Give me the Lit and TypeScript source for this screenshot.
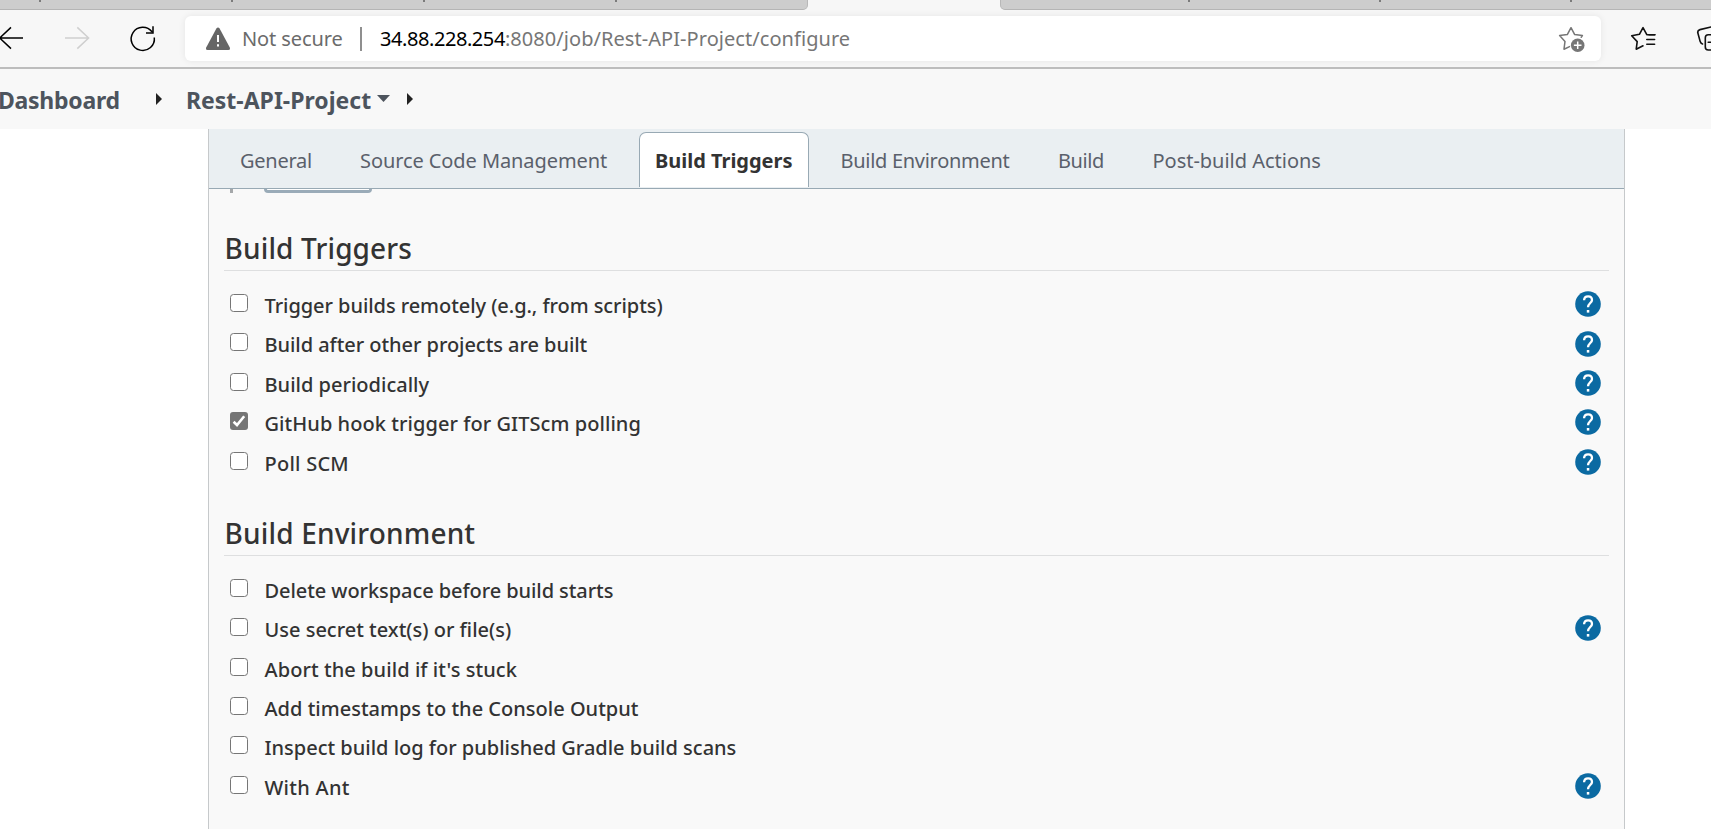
import { LitElement, html, css, nothing } from 'lit';
import { customElement, property } from 'lit/decorators.js';
import { classMap } from 'lit/directives/class-map.js';
import { styleMap } from 'lit/directives/style-map.js';

interface Option {
  label: string;
  spacing: number;
  help?: boolean;
  checked?: boolean;
}

const TABS = [
  { label: 'General', spacing: -0.26 },
  { label: 'Source Code Management', spacing: -0.084 },
  { label: 'Build Triggers', spacing: -0.02, active: true },
  { label: 'Build Environment', spacing: -0.29 },
  { label: 'Build', spacing: -0.42 },
  { label: 'Post-build Actions', spacing: -0.02 },
];

const TRIGGERS: Option[] = [
  { label: 'Trigger builds remotely (e.g., from scripts)', spacing: -0.06, help: true },
  { label: 'Build after other projects are built', spacing: -0.05, help: true },
  { label: 'Build periodically', spacing: 0.009, help: true },
  { label: 'GitHub hook trigger for GITScm polling', spacing: 0.06, help: true, checked: true },
  { label: 'Poll SCM', spacing: 0.25, help: true },
];

const ENVIRONMENT: Option[] = [
  { label: 'Delete workspace before build starts', spacing: -0.07 },
  { label: 'Use secret text(s) or file(s)', spacing: 0 },
  { label: "Abort the build if it's stuck", spacing: 0.07 },
  { label: 'Add timestamps to the Console Output', spacing: 0.01 },
  { label: 'Inspect build log for published Gradle build scans', spacing: -0.005 },
  { label: 'With Ant', spacing: 0.28, help: true },
];
ENVIRONMENT[1].help = true;

const spacing = (value: number) => styleMap({ letterSpacing: `${value}px` });

@customElement('browser-chrome')
class BrowserChrome extends LitElement {
  static styles = css`
    :host { display: block; background: #f7f7f7; border-bottom: 2px solid #bdbdbd; height: 67px; }
    svg { display: block; flex: none; }
    .strip { display: flex; justify-content: space-between; height: 10px; }
    .group { box-sizing: border-box; height: 10px; background: #cdcdcd; border-bottom: 1px solid #b5b5b5; display: flex; }
    .left { width: 808px; border-radius: 0 0 5px 0; border-right: 1px solid #b8b8b8; padding-left: 39px; gap: 190px; }
    .right { width: 711px; border-radius: 0 0 0 5px; border-left: 1px solid #b8b8b8; padding-left: 187px; gap: 189px; }
    .tick { width: 2px; height: 2px; background: #7b7b7b; }
    .bar { display: flex; align-items: center; height: 57px; }
    .nav { width: 185px; }
    .address {
      box-sizing: border-box; display: flex; align-items: center; width: 1416px; height: 45px;
      background: #fff; border-radius: 6px; box-shadow: 0 0 7px rgba(0, 0, 0, 0.08);
      padding-left: 20px; font: 20px/26px "Noto Sans", sans-serif; white-space: nowrap; color: #6b6b6b;
    }
    .status { width: 118px; margin-left: 11px; letter-spacing: -0.1px; }
    .rule { width: 2px; height: 24px; background: #8f8f8f; margin-right: 18px; }
    .host { color: #000; letter-spacing: -0.43px; }
    .path { color: #767676; letter-spacing: 0.055px; flex: 1; }
    .star { margin-right: 14px; }
    .tools { width: 110px; overflow: hidden; }
  `;
  render() {
    return html`
      <div class="strip">
        <div class="group left">${[0, 1, 2, 3].map(() => html`<i class="tick"></i>`)}</div>
        <div class="group right">${[0, 1, 2].map(() => html`<i class="tick"></i>`)}</div>
      </div>
      <div class="bar">
        <svg class="nav" width="185" height="57" viewBox="0 10 185 57" fill="none" stroke="#000" stroke-width="1.5">
          <path d="M23 38H-.3M11 27.4L-.3 38L11 48.6" />
          <path stroke="#cfcfcf" d="M65 38H88.5M77.3 27.4L88.6 38L77.3 48.6" />
          <path d="M154.3 37.5A11.6 11.6 0 1 1 152 31.8M153 26.2V33H146" />
        </svg>
        <div class="address">
          <svg width="26" height="26" viewBox="0 0 26 26">
            <path fill="#666" d="M11.4 2.5Q13 .4 14.6 2.5L24.8 21.5Q25.6 24 23.4 24H2.6Q.4 24 1.2 21.5Z" />
            <path stroke="#fff" stroke-width="2" d="M13 9V16M13 18.2V20.4" />
          </svg>
          <span class="status">Not secure</span><span class="rule"></span>
          <span class="host">34.88.228.254</span><span class="path">:8080/job/Rest-API-Project/configure</span>
          <svg class="star" width="30" height="30" viewBox="1557 24 30 30">
            <path fill="none" stroke="#767676" stroke-width="1.5" stroke-linejoin="round" stroke-linecap="round"
              d="M1569.5 46.6L1564 49.2L1565 41.4L1559.6 35.6L1567.3 34.6L1571 27.7L1574.7 34.6L1582.4 35.6L1581.2 37.2" />
            <circle cx="1577.7" cy="45.3" r="6.8" fill="#767676" />
            <path stroke="#fff" stroke-width="1.5" d="M1577.7 41.5V49.1M1573.9 45.3H1581.5" />
          </svg>
        </div>
        <svg class="tools" width="110" height="57" viewBox="1601 10 110 57" fill="none" stroke="#111" stroke-width="1.6" stroke-linejoin="round" stroke-linecap="round">
          <path d="M1655 34.7L1646.8 34.7L1643 27.7L1639.4 34.3L1631.7 35.8L1637.2 41.6L1636.2 49.2L1643 45.8" />
          <path d="M1649 34.7H1654.6M1646.8 39.5H1654.6M1646.8 44.3H1654.6" />
          <path d="M1711 27L1700 29.6Q1697.3 30.3 1697.8 32.8L1700.2 41.6Q1700.8 43.5 1702.5 44" />
          <path d="M1714 34.7H1708.3Q1705.3 34.7 1705.3 37.7V47Q1705.3 50 1708.3 50H1714M1708.2 42.3H1714" />
        </svg>
      </div>
    `;
  }
}

@customElement('crumb-bar')
class CrumbBar extends LitElement {
  static styles = css`
    :host {
      display: flex; align-items: center; height: 60px; background: #f8f8f8; color: #4d545d;
      font: 700 23px/30px "Noto Sans", sans-serif; white-space: nowrap;
    }
    svg { display: block; }
    .root { width: 158px; margin-left: -2px; padding-top: 2px; letter-spacing: -0.27px; }
    .job { margin-left: 24px; padding-top: 2px; }
    .caret { margin: 0 17px 2px 6px; }
  `;
  private arrow() {
    return html`<svg width="6" height="12" viewBox="0 0 6 12"><path fill="#222" d="M0 0L6 6L0 12Z" /></svg>`;
  }
  render() {
    return html`
      <span class="root">Dashboard</span>${this.arrow()}
      <span class="job">Rest-API-Project</span>
      <svg class="caret" width="13" height="7" viewBox="0 0 13 7"><path fill="#4d545d" d="M0 0H13L6.5 7Z" /></svg>
      ${this.arrow()}
    `;
  }
}

@customElement('option-section')
class OptionSection extends LitElement {
  @property() heading = '';
  @property({ type: Number }) tracking = 0;
  @property({ attribute: false }) options: Option[] = [];

  static styles = css`
    :host { display: block; padding: 0 15px; }
    h2 {
      margin: 0 0 12.8px; padding: 1px 0 4px 0.6px; border-bottom: 1px solid #dedfe0;
      font: 500 28px/36px "Noto Sans", sans-serif; color: #333;
    }
    .row { display: flex; align-items: center; height: 39.4px; padding: 0 8px 0 6px; }
    .box {
      appearance: none; box-sizing: border-box; width: 18px; height: 18px; margin: 0 16.5px 0.8px 0; flex: none;
      border: 1.5px solid #767676; border-radius: 3.5px; background: #fff;
    }
    .tick { display: block; width: 18px; height: 18px; margin: 0 16.5px 0.8px 0; flex: none; }
    .label { flex: 1; font: 500 20px/26px "Noto Sans", sans-serif; color: #333; padding-top: 5px; white-space: nowrap; }
    .help { display: block; width: 26px; height: 26px; margin-top: 1.3px; }
    .heading { display: block; }
  `;
  render() {
    return html`
      <h2><span class="heading" style=${spacing(this.tracking)}>${this.heading}</span></h2>
      ${this.options.map(
        (o) => html`<div class="row">
          ${o.checked
            ? html`<svg class="tick" viewBox="0 0 18 18"><rect width="18" height="18" rx="3" fill="#757575" />
                <path d="M3.6 9.7L7 13L14.2 4.2" fill="none" stroke="#fff" stroke-width="2.6" /></svg>`
            : html`<input class="box" type="checkbox" aria-label=${o.label} />`}
          <span class="label" style=${spacing(o.spacing)}>${o.label}</span>
          ${o.help
            ? html`<svg class="help" viewBox="0 0 26 26">
                <circle cx="13" cy="13" r="12.8" fill="#0b6aa2" />
                <path d="M9.1 9.3C9.1 6.7 10.8 5.3 13.1 5.3C15.4 5.3 17 6.8 17 8.9C17 11.9 13 12.2 13 16.3" fill="none" stroke="#fff" stroke-width="2.3" />
                <rect x="11.8" y="19" width="2.5" height="2.6" fill="#fff" />
              </svg>`
            : nothing}
        </div>`,
      )}
    `;
  }
}

@customElement('app-root')
class AppRoot extends LitElement {
  static styles = css`
    :host { display: block; height: 829px; overflow: hidden; background: #fff; }
    .panel {
      box-sizing: border-box; width: 1417px; height: 700px; margin-left: 208px; background: #f9f9f9;
      border: solid #c6c9cb; border-width: 0 1px;
    }
    .tabs {
      box-sizing: border-box; display: grid; grid-template-columns: 120px 295px 185.5px 217.5px 94.5px 1fr;
      height: 60px; padding: 3px 0 0 15px; background: #eaeff2; border-bottom: 1px solid #98a9b4;
      font: 20px/26px "Noto Sans", sans-serif; color: #5a606b; white-space: nowrap;
    }
    .tab { box-sizing: border-box; height: 55px; padding: 15px 15px 0; border: 1px solid transparent; border-bottom: 0; justify-self: start; }
    .active { width: 170px; background: #fff; color: #333; font-weight: 700; border-color: #98a9b4; border-radius: 7px 7px 0 0; }
    .remnant { display: flex; height: 40px; align-items: flex-start; padding-left: 21px; }
    .handle { width: 3px; height: 4px; background: #a5a8aa; }
    .button { box-sizing: border-box; width: 108px; height: 4px; margin-left: 31px; border: 3px solid #9aabb8; border-top: 0; border-radius: 0 0 5px 5px; background: #fff; }
    .second { margin-top: 33px; }
  `;
  render() {
    return html`
      <browser-chrome></browser-chrome>
      <crumb-bar></crumb-bar>
      <main class="panel">
        <nav class="tabs">
          ${TABS.map(
            (t) => html`<div class=${classMap({ tab: true, active: !!t.active })} style=${spacing(t.spacing)}>${t.label}</div>`,
          )}
        </nav>
        <div class="remnant"><i class="handle"></i><i class="button"></i></div>
        <option-section heading="Build Triggers" tracking="0.13" .options=${TRIGGERS}></option-section>
        <option-section class="second" heading="Build Environment" tracking="0.16" .options=${ENVIRONMENT}></option-section>
      </main>
    `;
  }
}
